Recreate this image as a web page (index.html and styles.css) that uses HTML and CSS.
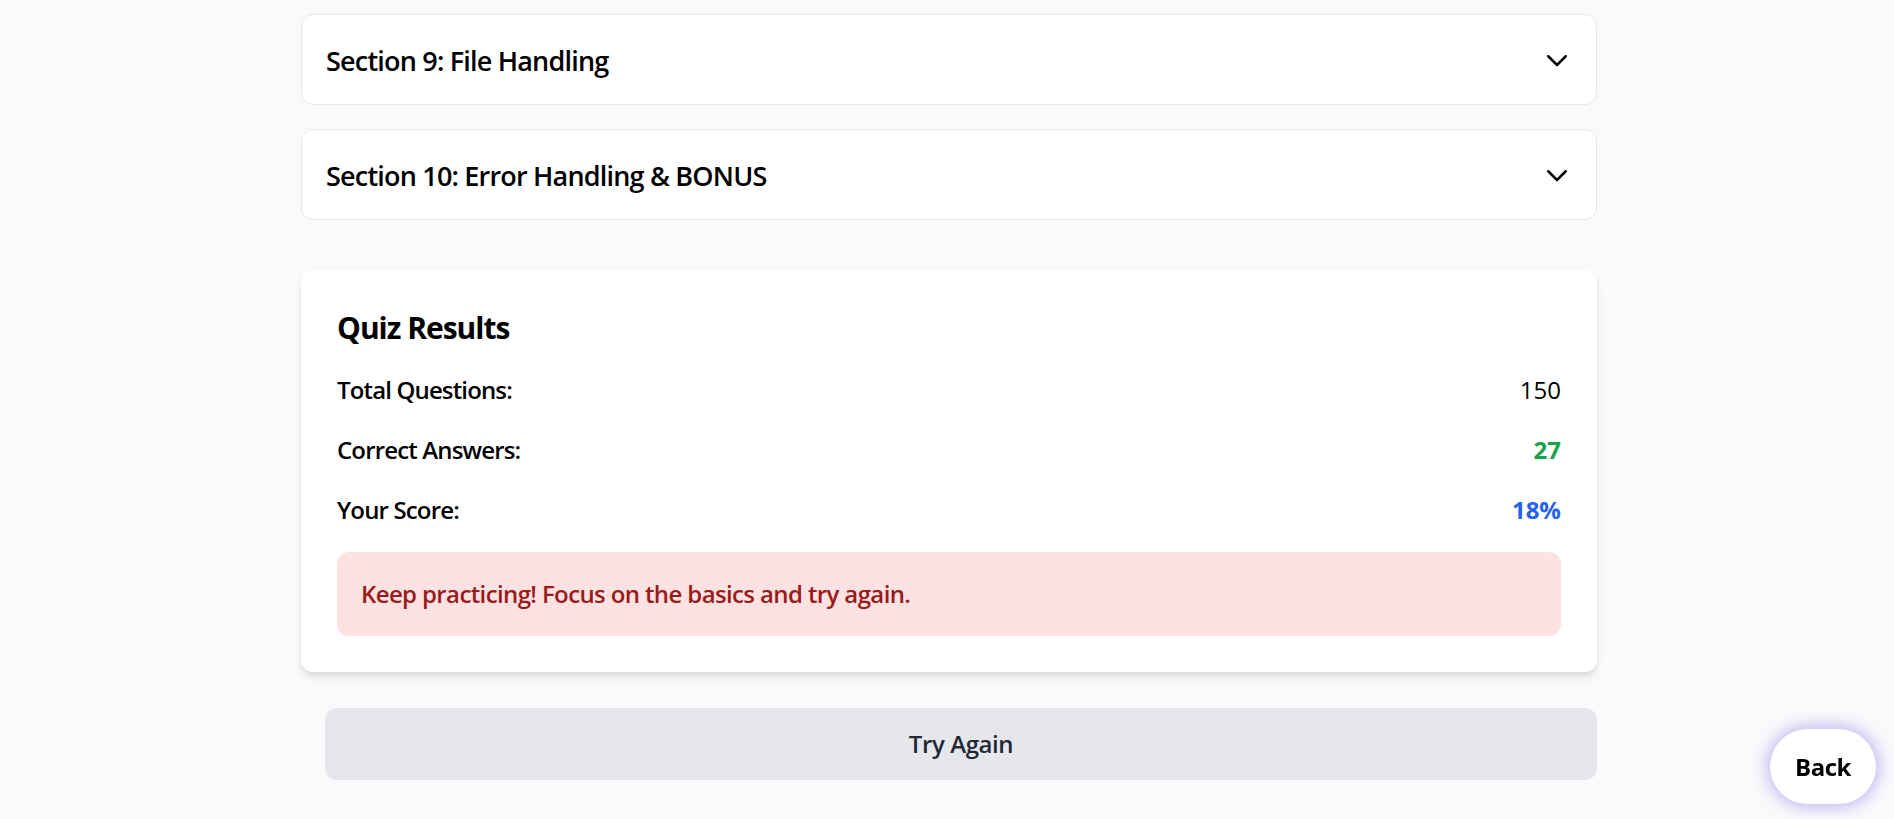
FILE: index.html
```html
<!DOCTYPE html>
<html lang="en">
<head>
<meta charset="utf-8">
<title>Quiz</title>
<link rel="stylesheet" href="styles.css">
</head>
<body>
<div class="page">
  <div class="sections">
    <div class="acc">
      <button class="acc-head">
        <span class="acc-title">Section 9: File Handling</span>
        <svg class="chev" viewBox="0 0 24 24" fill="none" stroke="currentColor" stroke-width="2" stroke-linecap="round" stroke-linejoin="round"><path d="M19 9l-7 7-7-7"/></svg>
      </button>
    </div>
    <div class="acc">
      <button class="acc-head">
        <span class="acc-title">Section 10: Error Handling &amp; BONUS</span>
        <svg class="chev" viewBox="0 0 24 24" fill="none" stroke="currentColor" stroke-width="2" stroke-linecap="round" stroke-linejoin="round"><path d="M19 9l-7 7-7-7"/></svg>
      </button>
    </div>
  </div>

  <div class="results">
    <h2 class="results-title">Quiz Results</h2>
    <div class="rows">
      <div class="row"><span class="label">Total Questions:</span><span class="val">150</span></div>
      <div class="row"><span class="label">Correct Answers:</span><span class="val val-green">27</span></div>
      <div class="row"><span class="label">Your Score:</span><span class="val val-blue">18%</span></div>
    </div>
    <div class="alert">Keep practicing! Focus on the basics and try again.</div>
  </div>

  <div class="actions">
    <button class="retry">Try Again</button>
  </div>
</div>
<button class="back">Back</button>
</body>
</html>
```
FILE: styles.css
```css
html, body {
  margin: 0;
  padding: 0;
  overflow: hidden;
}
body {
  background: #f9fafb;
  font-family: "Open Sans", "Noto Sans", sans-serif;
  color: #000;
  height: 819px;
}
.page {
  max-width: 1296px;
  margin: 0 auto;
  padding: 14px 0 0 4px;
}
.sections {
  display: flex;
  flex-direction: column;
  gap: 24px;
}
.acc {
  background: #fff;
  border: 1px solid #e5e7eb;
  border-radius: 12px;
}
.acc-head {
  width: 100%;
  display: flex;
  align-items: center;
  justify-content: space-between;
  padding: 23.5px 24px;
  background: transparent;
  border: 0;
  font-family: inherit;
  color: #000;
  cursor: pointer;
  text-align: left;
}
.acc-title {
  font-size: 27px;
  line-height: 42px;
  font-weight: 600;
  letter-spacing: -0.8px;
  position: relative;
  top: 1px;
}
.chev {
  width: 30px;
  height: 30px;
  flex: none;
  color: #000;
}
.results {
  margin-top: 50px;
  background: #fff;
  border-radius: 12px;
  padding: 36px;
  box-shadow: 0 6px 9px -1.5px rgba(0,0,0,0.1), 0 3px 6px -3px rgba(0,0,0,0.1);
}
.results-title {
  margin: 0 0 23px;
  padding-top: 1px;
  font-size: 30px;
  line-height: 42px;
  font-weight: 700;
  letter-spacing: -1px;
}
.rows {
  display: flex;
  flex-direction: column;
  gap: 24px;
}
.row {
  display: flex;
  justify-content: space-between;
  align-items: center;
  font-size: 24px;
  line-height: 36px;
}
.label {
  font-weight: 600;
  letter-spacing: -0.85px;
}
.val {
  font-weight: 400;
}
.val-green {
  color: #16a34a;
  font-weight: 700;
}
.val-blue {
  color: #2563eb;
  font-weight: 700;
}
.alert {
  margin-top: 24px;
  background: #fee2e2;
  color: #991b1b;
  border-radius: 12px;
  padding: 24px;
  font-size: 24px;
  line-height: 36px;
  font-weight: 600;
  letter-spacing: -0.62px;
}
.actions {
  margin-top: 36px;
  padding-left: 24px;
}
.retry {
  width: 100%;
  display: block;
  background: #e5e7eb;
  border: 0;
  border-radius: 12px;
  padding: 18px 24px;
  font-family: inherit;
  font-size: 24px;
  line-height: 36px;
  font-weight: 600;
  color: #1f2937;
  letter-spacing: -0.4px;
}
.back {
  position: fixed;
  right: 18px;
  bottom: 15px;
  width: 106px;
  height: 75px;
  border: 0;
  border-radius: 38px;
  background: #fff;
  font-family: inherit;
  font-size: 24px;
  font-weight: 700;
  color: #000;
  letter-spacing: -0.5px;
  box-shadow: 0 0 16px 3px rgba(120, 100, 230, 0.45);
}
```
